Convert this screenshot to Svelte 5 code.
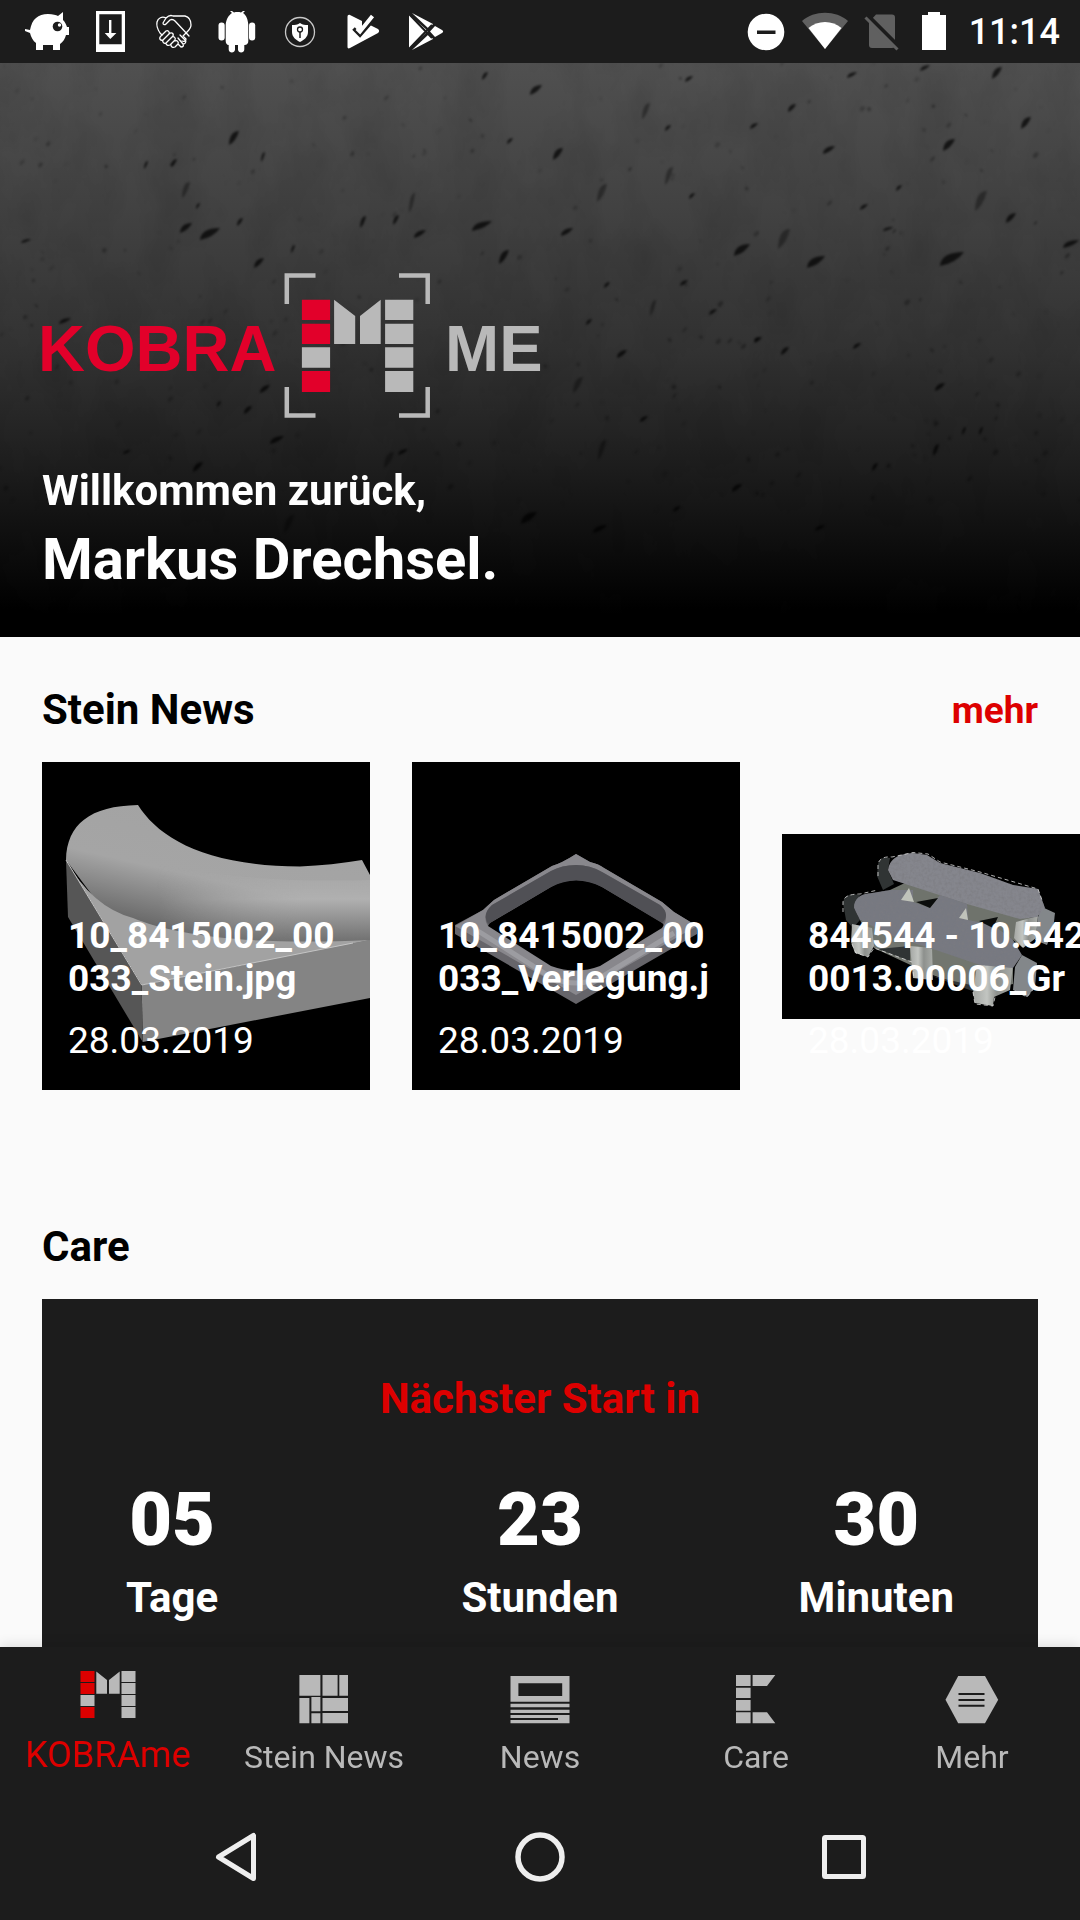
<script>
	let active = 'kobra';

	const tabs = [
		{ id: 'kobra', label: 'KOBRAme' },
		{ id: 'stein', label: 'Stein News' },
		{ id: 'news', label: 'News' },
		{ id: 'care', label: 'Care' },
		{ id: 'mehr', label: 'Mehr' }
	];

	const steine = [
		{ art: 'stein', name: '10_8415002_00033_Stein.jpg', date: '28.03.2019' },
		{ art: 'verlegung', name: '10_8415002_00033_Verlegung.j', date: '28.03.2019' },
		{ art: 'gruppe', name: '844544 - 10.5420013.00006_Gr', date: '28.03.2019' }
	];

	const countdown = [
		{ value: '05', unit: 'Tage' },
		{ value: '23', unit: 'Stunden' },
		{ value: '30', unit: 'Minuten' }
	];

	// pits in the concrete: x, y, half width, half height
	const pits = [
		[485, 13, 3, 4], [536, 27, 6, 5], [689, 16, 4, 3], [646, 48, 4, 8], [792, 45, 4, 4],
		[668, 65, 3, 3], [754, 63, 4, 3], [829, 87, 6, 4], [1026, 60, 5, 6], [949, 82, 6, 6],
		[234, 75, 5, 7], [558, 91, 5, 6], [510, 78, 3, 3], [174, 100, 3, 4], [263, 94, 2, 5],
		[146, 102, 2, 4], [186, 127, 4, 8], [198, 143, 2, 3], [669, 113, 4, 9], [602, 130, 5, 9],
		[899, 125, 3, 3], [864, 144, 4, 3], [981, 138, 6, 10], [1011, 155, 5, 5], [888, 166, 5, 2],
		[186, 165, 6, 5], [210, 171, 10, 6], [412, 140, 3, 10], [396, 157, 3, 5], [363, 159, 3, 6],
		[482, 163, 10, 5], [420, 171, 6, 4], [567, 169, 6, 4], [293, 186, 2, 4], [504, 194, 5, 7],
		[259, 200, 5, 5], [742, 187, 8, 6], [784, 176, 6, 10], [816, 199, 9, 6], [952, 196, 12, 7],
		[1071, 181, 8, 4], [26, 178, 5, 2], [607, 222, 3, 3], [684, 220, 4, 3], [653, 245, 3, 8],
		[713, 249, 4, 3], [589, 259, 3, 3], [622, 291, 5, 4], [785, 288, 4, 4], [757, 276, 3, 2],
		[940, 324, 5, 4], [265, 326, 5, 4], [248, 347, 4, 4], [219, 341, 2, 3], [578, 322, 5, 8],
		[644, 356, 4, 3], [964, 368, 2, 4], [981, 368, 2, 4], [277, 377, 7, 4], [127, 389, 4, 2],
		[198, 404, 5, 5], [389, 397, 5, 8], [403, 389, 5, 3], [602, 387, 4, 10], [936, 387, 3, 6],
		[875, 404, 3, 4], [737, 425, 5, 4], [529, 455, 8, 6], [600, 466, 7, 4], [289, 461, 5, 9],
		[677, 446, 4, 3], [820, 465, 5, 3], [65, 258, 6, 3], [240, 159, 3, 4], [852, 12, 5, 3],
		[925, 5, 5, 3], [997, 10, 5, 6], [692, 133, 3, 3], [758, 277, 4, 3], [857, 283, 4, 3]
	];

	function pitPath([x, y, w, h]) {
		return `M${x - w} ${y + h}Q${x - w * 0.9} ${y - h} ${x + w} ${y - h}Q${x + w * 0.4} ${y + h * 0.5} ${x - w} ${y + h}z`;
	}

	// finer grains between the pits
	let seed = 7;
	function rnd() {
		seed = (seed * 16807) % 2147483647;
		return seed / 2147483647;
	}
	const grains = Array.from({ length: 320 }, () => [rnd() * 1080, rnd() * 440, 1 + rnd() * 1.4, 1 + rnd() * 2.4, rnd() * 0.3]);
</script>

<div class="screen">
	<header class="status">
		<div class="notifications">
			<svg viewBox="0 0 63 63" fill="#fff">
				<path d="M14 30C16 19 22 14 32 14c5 0 8 1 10 2l5-4v8c2 2 3 4 4 7h2v8h-3c-1 4-3 7-6 9v6h-7v-5H27v5h-7v-7c-3-2-5-6-6-10l-5-2v-2l5 1z" />
				<circle cx="41.5" cy="26.5" r="4.8" fill="#1c1c1c" />
				<circle cx="43.5" cy="25" r="1.7" />
			</svg>
			<svg viewBox="0 0 63 63" fill="#fff">
				<path fill-rule="evenodd" d="M17 11h29v41H17zM20.3 14.3v30h22.4v-30z" />
				<path d="M30 20h2.4v13h5L31.3 39l-5.6-6H30z" />
			</svg>
			<svg viewBox="0 0 63 63" fill="none" stroke="#fff" stroke-width="1.3" stroke-linejoin="round" stroke-linecap="round">
				<path d="M24 18c3-3 5-3 7-2h12c4 1 6 5 6 9 0 3-2 5-4 7l-4 4 3 3c0 2-2 3-4 2M24 18c-4-2-8 0-9 4-1 5 1 8 3 11l2 2M24 18l-3 5c0 2 2 2 3 1l4-4c2-1 4 0 5 1l14 15" />
				<path d="M20 35l4-4c2-1 4 1 3 3l-6 6c-3 1-5-2-1-5zM21 40c-1 2 1 4 3 3l7-7c1-3-2-4-4-2M24 43c0 2 2 3 4 2l5-5c1-2-1-4-3-3M29 45c0 2 2 3 4 2l3-3c1-2-1-4-3-3M36 44l3 3c2 0 3-1 2-3l-5-6M41 44c2 0 4-2 2-4l-5-5" />
			</svg>
			<svg viewBox="0 0 63 63" fill="#fff">
				<path d="M20.7 25C21 19 24 15 27 13l-2-2h2l2 1.5c2-.6 5-.6 7 0L38 11h2l-2 2c3 2 5 6 5.3 12v16c0 2-1 4-4 4v4.500c0 4-6.300 4-6.300 0V45h-3v4.500c0 4-6.300 4-6.300 0V45c-2 0-3-2-3-4z" />
				<rect x="13.500" y="22.500" width="6.200" height="18" rx="3" />
				<rect x="44" y="22.500" width="6.200" height="18" rx="3" />
			</svg>
			<svg viewBox="0 0 63 63" fill="none">
				<circle cx="32" cy="32" r="14.500" stroke="#c8c8c8" stroke-width="1.300" />
				<path d="M32 23c3 2 5 2 8 2v7c0 5-4 8-8 10-4-2-8-5-8-10v-7c3 0 5 0 8-2z" fill="#fff" />
				<path d="M32 32v6" stroke="#1c1c1c" stroke-width="1.500" />
				<circle cx="32" cy="29.500" r="2.500" stroke="#1c1c1c" stroke-width="1.300" />
			</svg>
			<svg viewBox="0 0 63 63">
				<path d="M16.500 17c0-2 1-2.500 2.500-2L47 29c1.500 1 1.500 3 0 4L19 48c-1.500 1-2.500 0-2.500-1z" fill="#fff" />
				<path d="M31 20l8-9 3 2-11 16z" fill="#1c1c1c" />
				<path d="M22.500 28.500l6.500 6.500L43 19" fill="none" stroke="#1c1c1c" stroke-width="3.600" />
				<path d="M26 28.500l3 3L41.500 16" fill="none" stroke="#fff" stroke-width="4" />
			</svg>
			<svg viewBox="0 0 63 63">
				<path d="M15 14.500v34L34 31z M18 13l21 11-4 5zM41 26l7 4c1.500 1 1.500 2 0 3l-7 4-5-5.500zM18 50l21-11-4-5z" fill="#fff" />
				<path d="M15 14l23 24M15 49l23-24" stroke="#1c1c1c" stroke-width="2" />
			</svg>
		</div>
		<div class="system">
			<svg viewBox="0 0 58 63"><circle cx="29" cy="32" r="18.300" fill="#fff" /><path d="M20 30.500h18.500v3.500H20z" fill="#1c1c1c" /></svg>
			<svg viewBox="0 0 58 63">
				<path d="M7 21c12-11 34-11 46 0L30 49z" fill="#606060" />
				<path d="M13.500 28c9-8 24-8 33 0L30 49z" fill="#fff" />
			</svg>
			<svg viewBox="0 0 58 63">
				<path d="M23 14.500h16c2 0 3 1 3 3V45c0 2-1 3-3 3H19c-2 0-3-1-3-3V22z" fill="#606060" />
				<path d="M14 16l31 31" stroke="#1c1c1c" stroke-width="6" />
				<path d="M12.500 17.500l32 32" stroke="#606060" stroke-width="3" />
			</svg>
			<svg viewBox="0 0 58 63"><path d="M17 12h12v3h6v35H11V15h6z" fill="#fff" /></svg>
			<time>11:14</time>
		</div>
	</header>

	<main>
		<section class="hero">
			<svg class="concrete" viewBox="0 0 1080 574" preserveAspectRatio="xMidYMid slice" aria-hidden="true">
				<defs>
					<filter id="rough" x="0" y="0" width="100%" height="100%">
						<feTurbulence type="fractalNoise" baseFrequency="0.02 0.012" numOctaves="5" seed="4" />
						<feColorMatrix values="0 0 0 0 0  0 0 0 0 0  0 0 0 0 0  1.400 0 0 0 -0.500" />
					</filter>
					<filter id="soft"><feGaussianBlur stdDeviation="0.900" /></filter>
				</defs>
				<rect width="1080" height="574" filter="url(#rough)" opacity="0.120" />
				<g filter="url(#soft)">
					{#each grains as [x, y, rx, ry, o]}
						<ellipse cx={x} cy={y} {rx} {ry} opacity={o} transform="rotate(40 {x} {y})" />
					{/each}
					{#each pits as pit}
						<path d={pitPath(pit)} opacity={pit[3] > 7 ? 0.35 : 0.7} />
					{/each}
				</g>
			</svg>
			<div class="intro">
				<svg class="logo" viewBox="42 273 500 146" role="img" aria-label="KOBRA ME">
					<text x="38" y="371" fill="#e2002a">KOBRA</text>
					<text x="445" y="371" fill="#b9b9b9">ME</text>
					<g transform="translate(284.500 273)">
						<path fill="none" stroke="#b9b9b9" stroke-width="4.500" d="M31 2.500H2.300V31M114.500 2.500h28.700V31M2.300 114v28.500H31M143.200 114v28.500h-28.700" />
						<path fill="#e2002a" d="M17.400 26.700h28.200v20.400H17.400zM17.400 50.700h28.200v20.400H17.400zM17.400 98h28.200v21H17.400z" />
						<path fill="#b9b9b9" d="M17.400 74.300h28.200v20.400H17.400zM100.600 26.700h28.200v20.400h-28.200zM100.600 50.700h28.200v20.400h-28.200zM100.600 74.300h28.200v20.400h-28.200zM100.600 98h28.200v21h-28.200zM49.600 26.700L70.700 43v28H49.600zM96.200 26.700L75.500 43v28h20.700z" />
					</g>
				</svg>
				<p class="welcome">Willkommen zurück,</p>
				<h1>Markus Drechsel.</h1>
			</div>
		</section>

		<section class="block">
			<div class="head">
				<h2>Stein News</h2>
				<a href="#stein">mehr</a>
			</div>
			<div class="cards">
				{#each steine as stein}
					<article class="card">
						{#if stein.art === 'stein'}
							<svg viewBox="0 0 328 328">
								<defs>
									<linearGradient id="bow" x1="0.600" y1="0.100" x2="0.250" y2="0.900">
										<stop offset="0" stop-color="#a3a3a3" />
										<stop offset="0.450" stop-color="#a5a5a5" />
										<stop offset="0.900" stop-color="#606060" />
									</linearGradient>
									<linearGradient id="tube" x1="0" y1="0" x2="0" y2="1">
										<stop offset="0" stop-color="#acacac" stop-opacity="0" />
										<stop offset="0.450" stop-color="#b0b0b0" />
										<stop offset="1" stop-color="#6c6c6c" />
									</linearGradient>
									<linearGradient id="fade" x1="0" y1="0" x2="1" y2="0">
										<stop offset="0.350" stop-color="#000" />
										<stop offset="0.800" stop-color="#fff" />
									</linearGradient>
									<mask id="right"><rect width="328" height="328" fill="url(#fade)" /></mask>
								</defs>
								<rect width="328" height="328" />
								<path fill="url(#bow)" d="M24 98C25 62 48 44 96 43C116 75 162 104 258 104.500Q290 103 320 98L328 113V200H100z" />
								<path fill="url(#tube)" mask="url(#right)" d="M110 100Q200 122 328 118V182Q160 185 90 155z" />
								<path fill="#a2a2a2" d="M24 98Q50 145 91 156C130 172 200 184 328 178L100 223z" />
								<path fill="#848484" d="M99.700 223L328 178V236L100.700 280z" />
								<path fill="#565656" d="M24 98L26 155L100.700 280L99.700 223z" />
								<path fill="none" stroke="#c4c4c4" d="M24 98L99.700 223L311 181" />
							</svg>
						{:else if stein.art === 'verlegung'}
							<svg viewBox="0 0 328 328">
								<rect width="328" height="328" />
								<path fill="#66656a" d="M164 92L178 100Q187 102 192 106L250 140L262 150L285 164V172L164 242L43 172V163L71 148L82 138L140 104Q150 101 164 92zM164 118Q150 118 139 125L78 161Q73 166 79 170L139 207Q164 217 188 207L248 171Q256 165 249 160L190 125Q178 118 164 118z" />
								<path fill="#88878c" fill-rule="evenodd" d="M164 92L178 100Q187 102 192 106L250 140L262 150L285 164L164 233L43 164L71 148L82 138L140 104Q150 101 164 92zM164 103Q150 103 139 109L80 143Q69 153 76 164L139 204Q164 213 188 204L250 166Q259 153 248 143L190 110Q178 103 164 103z" />
								<path fill="#505055" d="M164 103Q150 103 139 109L80 143Q70 152 76 162L139 125Q164 112 190 125L250 161Q259 152 248 143L190 110Q178 103 164 103z" />
								<path fill="none" stroke="#a5a5aa" stroke-width="5" d="M66 169L140 216Q164 226 188 216L262 171" opacity="0.700" />
							</svg>
						{:else}
							<svg viewBox="0 0 328 185">
								<defs>
									<filter id="grain" x="0" y="0" width="100%" height="100%">
										<feTurbulence type="fractalNoise" baseFrequency="0.350" numOctaves="2" seed="3" />
										<feColorMatrix values="0 0 0 0 0.200  0 0 0 0 0.200  0 0 0 0 0.220  1.600 0 0 0 -0.650" />
										<feComposite in2="SourceAlpha" operator="in" result="dots" />
										<feMerge><feMergeNode in="SourceGraphic" /><feMergeNode in="dots" /></feMerge>
									</filter>
									<linearGradient id="foot" x1="0" y1="0" x2="1" y2="0">
										<stop offset="0" stop-color="#a4a7a4" />
										<stop offset="0.350" stop-color="#c2c5c1" />
										<stop offset="0.600" stop-color="#8d908d" />
										<stop offset="1" stop-color="#a9aca8" />
									</linearGradient>
								</defs>
								<rect width="328" height="185" />
								<path fill="#6f736c" d="M108 56L125 48L240 84L255 83L240 113L231 106L180 92L110 75z" />
								<path fill="#72766f" d="M78 86L148 106L231 128L231 150L196 158L148 140L92 114z" />
								<g fill="#303434">
									<path d="M108 24Q98 22 96 30L95 42L101 56L112 50L106 36z" />
									<path d="M78 61Q62 58 61 69L64 86L71 94L78 86L72 74z" />
									<path d="M96 115L128 112V127zM150 142L193 152V158z" />
								</g>
								<g fill="url(#foot)">
									<path d="M70 90L90 94L92 112L86 123L73 119L69 108z" />
									<path d="M128 112L150 114L151 146L131 144z" />
									<path d="M195 131L231 131L228 156L212 163L211 172L193 169L191 159z" />
									<path d="M234 88L256 82L254 104L241 114L232 104z" />
								</g>
								<g fill="#83878a">
									<path d="M240 121L255 129L253 153L245 163L231 156L233 133z" />
									<path d="M260 73L273 79L271 96L265 111L253 106L256 83z" />
								</g>
								<g filter="url(#grain)">
									<path fill="#85868d" d="M106 36Q108 20 131 19L145 21L158 29L198 39L231 51L256 55L263 74L255 83L238 85L185 70L111 46z" />
									<path fill="#777981" d="M72 74Q72 60 90 59L108 56L131 56L131 68L148 74L158 61L185 70L186 86L211 91L231 106L240 121L231 134L198 131L148 114L115 104L78 86z" />
								</g>
								<path fill="#c0c3ba" d="M127 54L132 68L119 66zM184 74L186 86L177 84z" />
								<path fill="#0b0d0c" d="M156 64L148 74L134 68zM216 83L211 94L197 87z" />
								<g fill="none" stroke="#dcdcdc" stroke-dasharray="4 3" opacity="0.800">
									<path d="M96 42V30Q98 22 110 23L131 18.500L146 20L158 28L198 38L256 55L260 66M61 78V68Q62 60 78 60L96 56M70 110L74 119L86 123L92 114L130 128L132 145M191 158L193 170L211 172L213 163M233 157L245 163L253 153" />
								</g>
							</svg>
						{/if}
						<div class="caption">
							<h3>{stein.name}</h3>
							<p>{stein.date}</p>
						</div>
					</article>
				{/each}
			</div>
		</section>

		<section class="block care">
			<div class="head">
				<h2>Care</h2>
			</div>
			<div class="timer">
				<h3>Nächster Start in</h3>
				<div class="units">
					{#each countdown as c}
						<div class="unit">
							<strong>{c.value}</strong>
							<span>{c.unit}</span>
						</div>
					{/each}
				</div>
			</div>
		</section>
	</main>

	<nav class="tabs">
		{#each tabs as tab}
			<button class:active={active === tab.id} on:click={() => (active = tab.id)}>
				<svg viewBox="0 0 63 63" fill="#b9b9b9" aria-hidden="true">
					{#if tab.id === 'kobra'}
						<path fill="#d00" d="M3.500 7h14v11h-14zM3.500 19h14v11h-14zM3.500 43h14v11h-14z" />
						<path d="M3.500 31h14v11h-14zM44.500 7h14v11h-14zM44.500 19h14v11h-14zM44.500 31h14v11h-14zM44.500 43h14v11h-14zM19.300 7.500L30 16v13.700H19.300zM42.700 7.500L32 16v13.700h10.700z" />
					{:else if tab.id === 'stein'}
						<path d="M6.400 7h21v20.700h-21zM29.500 7h15.100v20.700H29.500zM46.300 7H55v20.700h-8.700zM6.400 30h10v25.300h-10zM18.400 29h9v14.300h-9zM18.400 45.300h9v10h-9zM29.500 30H55v13H29.500zM29.500 45H55v10.300H29.500z" />
					{:else if tab.id === 'news'}
						<path fill-rule="evenodd" d="M1.500 8h59v25.700h-59zM9.400 15.300V28h43.800V15.300zM1.500 35.700h59v3.600h-59zM1.500 41.700h59V45h-59zM1.500 47h59v8.300h-59v-3.300H49v-2H1.500z" />
					{:else if tab.id === 'care'}
						<path d="M11 7h14.600v11H11zM11 19.700h14.600V30H11zM11 32h14.600v10.700H11zM11 44.300h14.600v11H11zM27.600 7h22.700L42 18H27.600zM27.600 44.300H42l8.300 11H27.600z" />
					{:else}
						<path d="M4.500 31.700L17.200 8H44l13.200 23.700L44 55.300H17.200z" />
						<path fill="#1c1c1c" d="M17.500 25h26v2h-26zM17.500 31h26v2h-26zM17.500 36.700h26v2h-26z" />
					{/if}
				</svg>
				<span>{tab.label}</span>
			</button>
		{/each}
	</nav>

	<nav class="sysnav">
		<button aria-label="Zurück">
			<svg viewBox="0 0 56 56"><path d="M10.500 28L45.500 6.500v43z" /></svg>
		</button>
		<button aria-label="Startbildschirm">
			<svg viewBox="0 0 56 56"><circle cx="28" cy="28" r="22" stroke-width="5.500" /></svg>
		</button>
		<button aria-label="Übersicht">
			<svg viewBox="0 0 56 56"><rect x="8.500" y="8.500" width="39" height="39" rx="1" /></svg>
		</button>
	</nav>
</div>

<style>
	:global(body) {
		background: #fafafa;
	}
	.screen {
		display: flex;
		flex-direction: column;
		height: 100vh;
		font-family: Roboto, sans-serif;
		color: #000;
	}
	svg {
		display: block;
		flex: none;
	}
	h1,
	h2,
	h3,
	p {
		margin: 0;
	}
	button {
		padding: 0;
		border: none;
		background: none;
		font: inherit;
		color: inherit;
	}

	.status {
		display: flex;
		justify-content: space-between;
		height: 63px;
		padding: 0 20px 0 16px;
		background: #1c1c1c;
		color: #fff;
	}
	.notifications,
	.system {
		display: flex;
		align-items: center;
	}
	.notifications svg {
		width: 63px;
		height: 63px;
	}
	.system svg {
		width: 58px;
		height: 63px;
	}
	.system time {
		font-size: 36px;
		font-weight: 500;
		line-height: 44px;
	}

	main {
		flex: 1;
		min-height: 0;
		overflow-y: auto;
		scrollbar-width: none;
	}

	.hero {
		position: relative;
		padding: 210px 42px 44px;
		color: #fff;
		background: linear-gradient(#505050, #424242 25%, #323232 50%, #1e1e1e 70%, #0e0e0e 84%, #000 96%);
	}
	.concrete {
		position: absolute;
		inset: 0;
		width: 100%;
		height: 100%;
	}
	.intro {
		position: relative;
	}
	.logo {
		width: 500px;
		height: 146px;
		margin-bottom: 48px;
		overflow: visible;
	}
	.logo text {
		font-family: 'Liberation Sans', Arial, sans-serif;
		font-size: 65px;
		font-weight: bold;
	}
	.welcome {
		margin-bottom: 10px;
		font-size: 42px;
		font-weight: bold;
		line-height: 48px;
	}
	h1 {
		font-size: 58px;
		line-height: 68px;
	}

	.block {
		padding: 49px 42px 0;
	}
	.care {
		padding-top: 133px;
		padding-bottom: 49px;
	}
	.head {
		display: flex;
		justify-content: space-between;
		align-items: center;
		margin-bottom: 28px;
	}
	h2 {
		font-size: 42px;
		line-height: 48px;
	}
	.head a {
		font-size: 37px;
		font-weight: bold;
		line-height: 43px;
		color: #d00;
		text-decoration: none;
	}

	.cards {
		display: flex;
		gap: 42px;
		margin-right: -42px;
		overflow-x: auto;
		scrollbar-width: none;
	}
	.card {
		display: grid;
		flex: none;
		width: 328px;
		height: 328px;
		color: #fff;
	}
	.card > * {
		grid-area: 1 / 1;
	}
	.card svg {
		align-self: center;
		width: 100%;
	}
	.caption {
		z-index: 1;
		align-self: end;
		padding: 0 20px 28px 26px;
	}
	.caption h3 {
		margin-bottom: 19px;
		font-size: 37px;
		line-height: 43px;
		word-break: break-all;
	}
	.caption p {
		font-size: 37px;
		line-height: 43px;
	}

	.timer {
		padding: 76px 84px;
		background: #1c1c1c;
		color: #fff;
	}
	.timer h3 {
		margin-bottom: 54px;
		font-size: 42px;
		line-height: 48px;
		text-align: center;
		color: #d00;
	}
	.units {
		display: grid;
		grid-template-columns: 1fr auto 1fr;
	}
	.unit {
		display: flex;
		flex-direction: column;
		align-items: center;
		gap: 11px;
		justify-self: start;
		font-weight: bold;
	}
	.unit:last-child {
		justify-self: end;
	}
	.unit strong {
		font-size: 74px;
		line-height: 86px;
	}
	.unit span {
		font-size: 42px;
		line-height: 48px;
	}

	.tabs {
		position: relative;
		display: flex;
		height: 147px;
		background: #1c1c1c;
		color: #b9b9b9;
		box-shadow: 0 -2px 12px rgba(0, 0, 0, 0.12);
	}
	.tabs button {
		display: flex;
		flex: 1 1 0;
		flex-direction: column;
		align-items: center;
		justify-content: flex-end;
		gap: 7px;
		padding-bottom: 18px;
	}
	.tabs svg {
		width: 63px;
		height: 63px;
	}
	.tabs span {
		font-size: 32px;
		line-height: 38px;
		white-space: nowrap;
	}
	.tabs .active span {
		font-size: 36px;
		line-height: 42px;
		color: #d00;
	}

	.sysnav {
		position: relative;
		display: flex;
		justify-content: center;
		height: 126px;
		background: #1c1c1c;
	}
	.sysnav button {
		display: flex;
		align-items: center;
		justify-content: center;
		width: 304px;
	}
	.sysnav svg {
		width: 56px;
		height: 56px;
		fill: none;
		stroke: #eee;
		stroke-width: 5px;
		stroke-linejoin: round;
	}
</style>
